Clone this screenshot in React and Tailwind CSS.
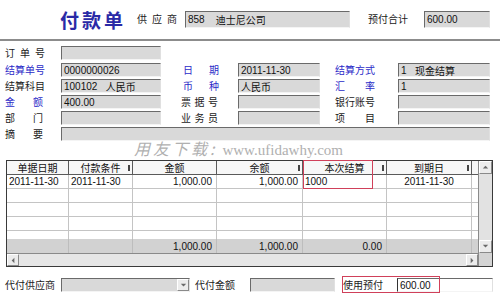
import React from 'react';

const CJK = '"Noto Sans CJK SC", "Noto Sans", sans-serif';
const NUM = '"Liberation Sans", "Noto Sans CJK SC", sans-serif';

const Field = ({ w, children, white, className = '' }) => (
  <div
    className={`h-[14px] shrink-0 flex items-center px-[2px] text-[10px] text-[#111] whitespace-nowrap overflow-hidden border-t border-l border-t-[#6a6a6a] border-l-[#6a6a6a] border-b border-r border-b-[#f4f4f4] border-r-[#e0e0e0] ${white ? 'bg-white' : 'bg-[#d9d9d9]'} ${className}`}
    style={{ width: w, fontFamily: NUM }}
  >
    {children}
  </div>
);

const Label = ({ chars, w, blue, pl = 0, spread = true }) => (
  <div className="h-[14px] flex items-center shrink-0" style={{ paddingLeft: pl }}>
    <div
      className={`flex text-[10px] leading-none ${spread ? 'justify-between' : ''} ${blue ? 'text-[#2b2bc8]' : 'text-[#1a1a1a]'}`}
      style={{ width: w }}
    >
      {chars.split('').map((c, i) => (
        <span key={i}>{c}</span>
      ))}
    </div>
  </div>
);

const cols = [62, 64, 84, 86, 84, 85, 6];

const Row = ({ cells = [], h = 14, bg = 'bg-white', border = true, line = 'border-[#c4c4c4]' }) => (
  <div className={`flex shrink-0 ${bg} ${border ? 'border-b border-[#c4c4c4]' : ''}`} style={{ height: h }}>
    {cols.map((w, i) => {
      const c = cells[i] || {};
      return (
        <div
          key={i}
          className={`h-full flex items-center px-[2px] text-[10px] text-[#111] whitespace-nowrap overflow-hidden ${i < cols.length - 1 ? `border-r ${line}` : ''} ${c.align === 'right' ? 'justify-end pr-[4px]' : c.align === 'center' ? 'justify-center' : ''}`}
          style={{ width: w, fontFamily: NUM }}
        >
          {c.t}
        </div>
      );
    })}
  </div>
);

const Arrow = ({ dir, className = '' }) => {
  const pts = {
    up: '2,6 5,3 8,6',
    down: '2,3 5,6 8,3',
    left: '6,2 3,5 6,8',
    right: '3,2 6,5 3,8',
  }[dir];
  return (
    <div className={`shrink-0 flex items-center justify-center bg-[#ececec] border border-t-white border-l-white border-b-[#8a8a8a] border-r-[#8a8a8a] ${className}`}>
      <svg width="9" height="9" viewBox="0 0 10 10">
        <polygon points={pts} fill="#6a6a6a" />
      </svg>
    </div>
  );
};

export default function App() {
  const headers = ['单据日期', '付款条件', '金额', '余额', '本次结算', '到期日', ''];
  return (
    <div className="relative w-[500px] h-[298px] bg-white overflow-hidden" style={{ fontFamily: CJK }}>
      {/* header */}
      <div className="h-[39px] flex items-center pb-[1px]">
        <div className="ml-[60px] w-[77px] text-[19px] font-bold tracking-[3px] text-[#2a2aa6] leading-none">付款单</div>
        <Label chars="供应商" w={40} />
        <div className="w-[8px]" />
        <Field w={165} className="!h-[17px]">
          858&nbsp;&nbsp;&nbsp;&nbsp;<span style={{ fontFamily: CJK }}>迪士尼公司</span>
        </Field>
        <div className="w-[18px]" />
        <Label chars="预付合计" w={34} spread={false} />
        <div className="w-[22px]" />
        <Field w={66} className="!h-[17px]">600.00</Field>
      </div>
      <div className="h-[2px] bg-[#8c8c8c]" />

      {/* form */}
      <div className="pt-[5px] pl-[5px]">
        <div className="flex">
          <Label chars="订单号" w={40} />
          <div className="w-[16px]" />
          <Field w={100} />
        </div>
        <div className="mt-[3px] flex flex-col gap-[2px]">
          <div className="flex">
            <Label chars="结算单号" w={38} blue spread={false} />
            <div className="w-[18px]" />
            <Field w={100}>0000000026</Field>
            <Label chars="日期" w={36} blue pl={22} />
            <div className="w-[19px]" />
            <Field w={82}>2011-11-30</Field>
            <Label chars="结算方式" w={40} blue pl={15} spread={false} />
            <div className="w-[23px]" />
            <Field w={92}>
              1&nbsp;&nbsp;&nbsp;<span style={{ fontFamily: CJK }}>现金结算</span>
            </Field>
          </div>
          <div className="flex">
            <Label chars="结算科目" w={38} spread={false} />
            <div className="w-[18px]" />
            <Field w={100}>
              100102&nbsp;&nbsp;&nbsp;<span style={{ fontFamily: CJK }}>人民币</span>
            </Field>
            <Label chars="币种" w={36} blue pl={22} />
            <div className="w-[19px]" />
            <Field w={82}>
              <span style={{ fontFamily: CJK }}>人民币</span>
            </Field>
            <Label chars="汇率" w={40} blue pl={15} />
            <div className="w-[23px]" />
            <Field w={92}>1</Field>
          </div>
          <div className="flex">
            <Label chars="金额" w={38} blue />
            <div className="w-[18px]" />
            <Field w={100}>400.00</Field>
            <Label chars="票据号" w={37} pl={20} />
            <div className="w-[20px]" />
            <Field w={82} />
            <Label chars="银行账号" w={40} pl={15} spread={false} />
            <div className="w-[23px]" />
            <Field w={92} />
          </div>
          <div className="flex">
            <Label chars="部门" w={38} />
            <div className="w-[18px]" />
            <Field w={100} />
            <Label chars="业务员" w={37} pl={20} />
            <div className="w-[20px]" />
            <Field w={82} />
            <Label chars="项目" w={40} pl={15} />
            <div className="w-[23px]" />
            <Field w={92} />
          </div>
          <div className="flex">
            <Label chars="摘要" w={38} />
            <div className="w-[18px]" />
            <Field w={429} />
          </div>
        </div>
      </div>

      {/* table */}
      <div className="mt-[19px] ml-[6px] w-[487px] flex border border-[#3a3a3a]">
        <div className="w-[471px] flex flex-col">
          <div className="flex shrink-0 h-[14px] bg-[#f7f7f7] border-b border-[#5a5a5a]">
            {cols.map((w, i) => (
              <div
                key={i}
                className={`relative h-full flex items-center justify-center text-[10px] text-[#111] leading-none ${i < cols.length - 1 ? 'border-r border-[#5a5a5a]' : ''}`}
                style={{ width: w }}
              >
                {headers[i]}
                {(i === 1 || i === 3 || i === 4 || i === 5) && (
                  <span className="absolute right-[2px] top-[4px] w-[2px] h-[6px] bg-[#444]" />
                )}
              </div>
            ))}
          </div>
          <Row
            cells={[
              { t: '2011-11-30' },
              { t: '2011-11-30' },
              { t: '1,000.00', align: 'right' },
              { t: '1,000.00', align: 'right' },
              { t: '1000' },
              { t: '2011-11-30', align: 'center' },
            ]}
          />
          <Row />
          <Row />
          <Row />
          <Row h={8} border={false} />
          <Row
            bg="bg-[#d2d2d2]"
            h={14}
            border={false}
            line="border-[#bdbdbd]"
            cells={[
              {},
              {},
              { t: '1,000.00', align: 'right' },
              { t: '1,000.00', align: 'right' },
              { t: '0.00', align: 'right' },
            ]}
          />
          <div className="h-[13px] shrink-0 flex bg-[#e6e6e6] border-t border-[#8a8a8a]">
            <Arrow dir="left" className="w-[12px] h-full" />
            <div className="flex-1" />
            <Arrow dir="right" className="w-[12px] h-full" />
          </div>
        </div>
        <div className="w-[14px] flex flex-col bg-[#e2e2e2] border-l border-[#8a8a8a]">
          <Arrow dir="up" className="h-[13px]" />
          <div className="flex-1" />
          <Arrow dir="down" className="h-[13px]" />
          <div className="h-[13px] shrink-0 bg-[#d4d4d4]" />
        </div>
      </div>

      {/* bottom */}
      <div className="mt-[11px] pl-[5px] flex items-center">
        <Label chars="代付供应商" w={50} spread={false} />
        <div className="w-[6px]" />
        <Field w={129} className="justify-end !pr-0">
          <Arrow dir="down" className="w-[12px] h-[12px]" />
        </Field>
        <div className="w-[5px]" />
        <Label chars="代付金额" w={38} spread={false} />
        <div className="w-[17px]" />
        <Field w={85} />
        <Label chars="使用预付" w={40} pl={8} spread={false} />
        <div className="w-[14px]" />
        <Field w={96} white className="border-l-[#333]">600.00</Field>
      </div>

      {/* overlays */}
      <div className="absolute left-[303px] top-[160px] w-[70px] h-[29px] border border-[#d0405a]" />
      <div className="absolute left-[342px] top-[276px] w-[98px] h-[17px] border border-[#d0405a]" />
      <div className="absolute left-[134px] top-[140px] flex items-baseline text-[#b0b0b0] leading-none whitespace-nowrap">
        <span className="text-[16px] italic tracking-[3px]" style={{ fontFamily: CJK }}>用友下载:</span>
        <span className="ml-[5px] text-[15px]" style={{ fontFamily: '"Liberation Serif", serif' }}>
          www.ufidawhy.com
        </span>
      </div>
    </div>
  );
}
